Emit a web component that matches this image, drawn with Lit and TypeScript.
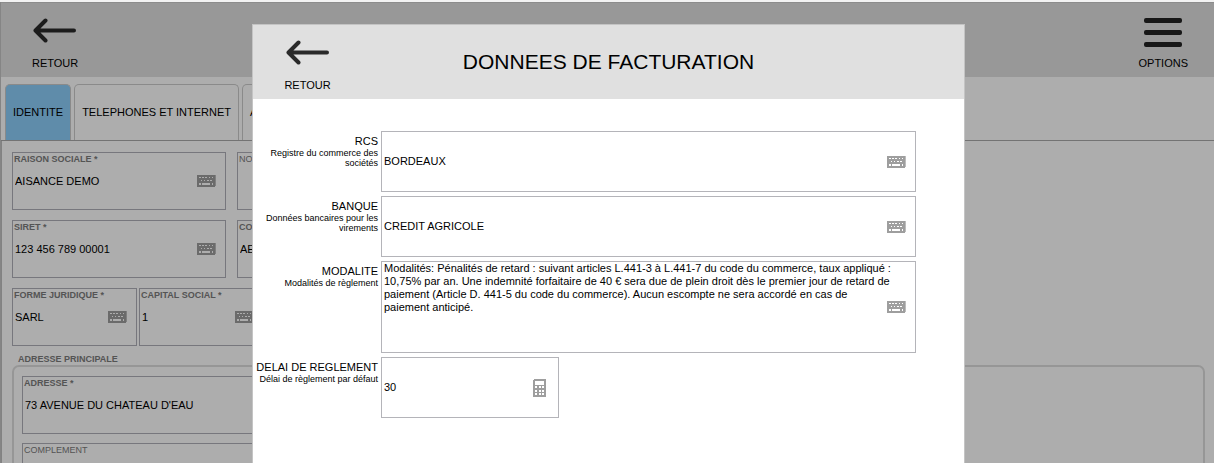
import { LitElement, html, css, svg } from "lit";
import { customElement, property } from "lit/decorators.js";

const rects = (cells: number[][]) =>
  cells.map(([x, y, w, h]) => svg`<rect x=${x} y=${y} width=${w} height=${h} fill="#fff"></rect>`);

const keyboardIcon = html`<svg width="19" height="12" viewBox="0 0 19 12" shape-rendering="crispEdges" aria-hidden="true">
  <rect width="18" height="12" fill="#9e9e9e"></rect>
  <rect x="18" width="1" height="11" fill="#bdbdbd"></rect>
  ${rects([
    [2, 2, 2, 1], [5, 2, 2, 1], [8, 2, 2, 1], [12, 2, 1, 1], [15, 2, 1, 1],
    [4, 5, 1, 1], [7, 5, 1, 1], [10, 5, 2, 1], [13, 5, 2, 1],
    [2, 8, 2, 2], [5, 8, 8, 2], [15, 8, 1, 2],
  ])}
</svg>`;

const calculatorIcon = html`<svg width="13" height="18" viewBox="0 0 13 18" shape-rendering="crispEdges" aria-hidden="true">
  <path d="M1 0H13V18H0V1H1z" fill="#9e9e9e"></path>
  ${rects([
    [2, 2, 9, 4],
    [2, 7, 2, 2], [6, 7, 2, 2], [9, 7, 2, 2],
    [2, 11, 2, 2], [6, 11, 2, 2], [9, 11, 2, 2],
    [2, 14, 2, 2], [6, 14, 2, 2], [9, 14, 2, 2],
  ])}
</svg>`;

const arrowIcon = html`<svg width="44" height="25" viewBox="0 0 44 25" aria-hidden="true">
  <path d="M41 12.5H3M12.5 2.5L2.5 12.5L12.5 22.5" fill="none" stroke="#2a2a2a" stroke-width="4" stroke-linecap="round" stroke-linejoin="round"></path>
</svg>`;

const menuIcon = html`<svg width="38" height="30" viewBox="0 0 38 30" aria-hidden="true">
  <g fill="#222">
    <rect y="0" width="38" height="5" rx="2"></rect>
    <rect y="12" width="38" height="5" rx="2"></rect>
    <rect y="24" width="38" height="5" rx="2"></rect>
  </g>
</svg>`;

@customElement("record-field")
class RecordField extends LitElement {
  @property() label = "";
  @property() value = "";
  @property({ type: Boolean }) required = false;
  @property({ type: Boolean }) keyboard = false;

  static styles = css`
    :host { display: block; min-width: 0; }
    .box {
      box-sizing: border-box; height: 58px; border: 1px solid #b0b0b8;
      display: grid; grid-template: 1fr / 1fr; position: relative;
    }
    label {
      position: absolute; top: 1px; left: 1px; font-size: 9px; line-height: 11px;
      color: #7c7c7c; white-space: nowrap;
    }
    .strong { font-weight: bold; }
    input {
      font: inherit; color: #000; background: none; border: 0; outline: 0;
      min-width: 0; width: 100%; box-sizing: border-box; padding: 0 32px 0 2px;
    }
    svg { position: absolute; right: 9px; top: 22px; }
  `;

  render() {
    return html`<div class="box">
      <label for="f" class=${this.required ? "strong" : ""}>${this.label}</label>
      <input id="f" .value=${this.value} ?required=${this.required} />
      ${this.keyboard ? keyboardIcon : ""}
    </div>`;
  }
}

@customElement("app-root")
class AppRoot extends LitElement {
  static styles = css`
    :host {
      display: block; position: relative; height: 100vh; overflow: hidden;
      font: 11px/13px "Liberation Sans", Arial, sans-serif; color: #000;
      box-sizing: border-box; border-top: 2px solid #f2f2f2; background: #fff;
    }
    button {
      font: inherit; color: inherit; background: none; border: 0; padding: 0; cursor: pointer;
    }
    .bar {
      height: 75px; box-sizing: border-box; background: #e0e0e0;
      display: flex; justify-content: space-between; align-items: flex-start;
    }
    .page > .bar { border-top: 1px solid #cecece; }
    .action {
      display: flex; flex-direction: column; align-items: center; justify-content: space-between;
      height: 52px; margin: 15px 26px 0 31px;
    }
    .page { height: 100%; border-left: 1px solid #c4c4c4; box-sizing: border-box; }
    .tabs { display: flex; gap: 3px; padding: 7px 4px 0; border-bottom: 1px solid #aaa; }
    .tab {
      height: 56px; padding: 0 7px; border: 1px solid #ccc; border-bottom: 0;
      border-radius: 5px 5px 0 0;
    }
    .active { background: #8ccefb; }
    .form {
      border-left: 1px solid #c0c0c0; padding: 11px 9px 0 10px;
      display: flex; flex-direction: column; gap: 10px; height: 400px;
    }
    .row { display: grid; grid-template-columns: 214px 214px; gap: 11px; }
    .narrow { grid-template-columns: 125px 125px; gap: 2px; }
    .group { display: flex; flex-direction: column; margin-top: -2px; }
    .group-title { font-size: 9px; line-height: 11px; font-weight: bold; color: #7c7c7c; padding-left: 6px; }
    .group-body {
      border: 2px solid #dedede; border-radius: 7px; padding: 9px 8px;
      display: grid; grid-template-columns: minmax(0, 600px); gap: 9px; height: 200px;
      align-content: start;
    }
    .backdrop {
      position: absolute; inset: 0; background: rgba(0, 0, 0, 0.32);
      display: flex; justify-content: center; padding: 22px 0 0 3px;
    }
    .modal {
      width: 713px; height: 600px; box-sizing: border-box; background: #fff; border: 1px solid #c4c4c4;
    }
    .heading { display: grid; grid-template-columns: 104px 1fr 104px; height: 74px; }
    h1 { margin: 0; font-size: 21px; line-height: 26px; font-weight: normal; text-align: center; align-self: center; }
    .fields {
      display: grid; grid-template-columns: 125px 1fr; column-gap: 3px; row-gap: 4px;
      padding: 32px 48px 0 0;
    }
    .caption { text-align: right; padding-top: 3px; line-height: 14px; display: block; }
    .hint { display: block; font-size: 9px; line-height: 10px; }
    .entry {
      position: relative; display: grid; border: 1px solid #b4b4b9; height: 61px; box-sizing: border-box;
    }
    .entry > svg { position: absolute; right: 9px; top: calc(50% - 6px); }
    .tall { height: 92px; }
    .short { width: 178px; }
    .short > svg { right: 12px; top: calc(50% - 9px); }
    .entry input, textarea {
      font: inherit; color: inherit; background: none; border: 0; outline: 0; resize: none;
      width: 100%; min-width: 0; box-sizing: border-box; padding: 0 36px 0 2px; overflow: hidden;
    }
    .entry textarea { padding-right: 21px; }
  `;

  render() {
    return html`
      <div class="page">
        <header class="bar">
          <button class="action">${arrowIcon}<span>RETOUR</span></button>
          <button class="action">${menuIcon}<span>OPTIONS</span></button>
        </header>
        <nav class="tabs">
          <button class="tab active">IDENTITE</button>
          <button class="tab">TELEPHONES ET INTERNET</button>
          <button class="tab">ACTIVITE</button>
        </nav>
        <main class="form">
          <div class="row">
            <record-field label="RAISON SOCIALE *" value="AISANCE DEMO" required keyboard></record-field>
            <record-field label="NOM" keyboard></record-field>
          </div>
          <div class="row">
            <record-field label="SIRET *" value="123 456 789 00001" required keyboard></record-field>
            <record-field label="CODE" value="AE" required keyboard></record-field>
          </div>
          <div class="row narrow">
            <record-field label="FORME JURIDIQUE *" value="SARL" required keyboard></record-field>
            <record-field label="CAPITAL SOCIAL *" value="1" required keyboard></record-field>
          </div>
          <section class="group" aria-labelledby="address">
            <div class="group-title" id="address">ADRESSE PRINCIPALE</div>
            <div class="group-body">
              <record-field label="ADRESSE *" value="73 AVENUE DU CHATEAU D'EAU" required></record-field>
              <record-field label="COMPLEMENT"></record-field>
            </div>
          </section>
        </main>
      </div>
      <div class="backdrop">
        <div class="modal" role="dialog" aria-labelledby="title">
          <header class="bar heading">
            <button class="action">${arrowIcon}<span>RETOUR</span></button>
            <h1 id="title">DONNEES DE FACTURATION</h1>
          </header>
          <form class="fields">
            <label class="caption" for="rcs">RCS<span class="hint">Registre du commerce des sociétés</span></label>
            <div class="entry"><input id="rcs" .value=${"BORDEAUX"} />${keyboardIcon}</div>
            <label class="caption" for="bank">BANQUE<span class="hint">Données bancaires pour les virements</span></label>
            <div class="entry"><input id="bank" .value=${"CREDIT AGRICOLE"} />${keyboardIcon}</div>
            <label class="caption" for="terms">MODALITE<span class="hint">Modalités de règlement</span></label>
            <div class="entry tall">
              <textarea id="terms" spellcheck="false" .value=${"Modalités: Pénalités de retard : suivant articles L.441-3 à L.441-7 du code du commerce, taux appliqué : 10,75% par an. Une indemnité forfaitaire de 40 € sera due de plein droit dès le premier jour de retard de paiement (Article D. 441-5 du code du commerce). Aucun escompte ne sera accordé en cas de paiement anticipé."}></textarea>
              ${keyboardIcon}
            </div>
            <label class="caption" for="delay">DELAI DE REGLEMENT<span class="hint">Délai de règlement par défaut</span></label>
            <div class="entry short"><input id="delay" .value=${"30"} />${calculatorIcon}</div>
          </form>
        </div>
      </div>
    `;
  }
}
